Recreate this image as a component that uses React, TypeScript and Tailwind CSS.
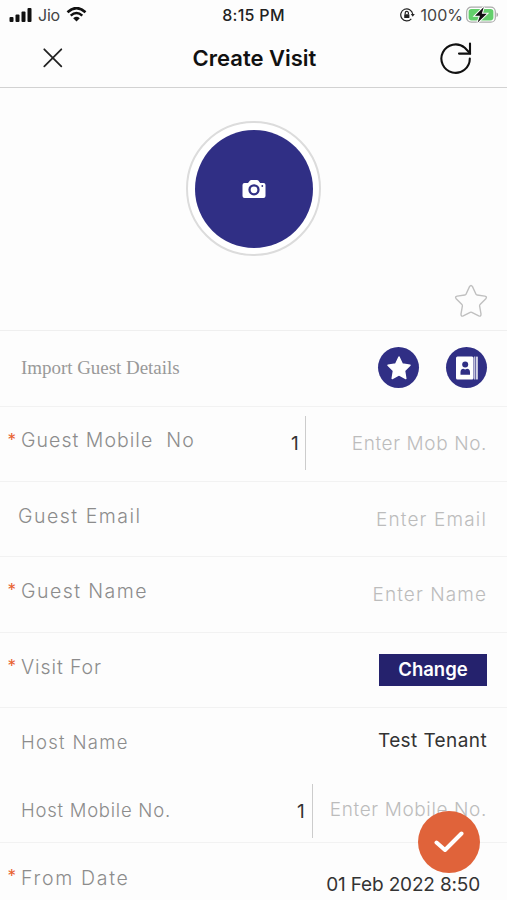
import { ReactNode } from "react";
import clsx from "clsx";

type RowProps = {
  label: string;
  required?: boolean;
  className?: string;
  labelClass?: string;
  children?: ReactNode;
};

function Row({ label, required, className, labelClass, children }: RowProps) {
  return (
    <div className={clsx("flex justify-between pr-5", className)}>
      <div className="flex pt-[20px]">
        <span className="-mt-px w-[21px] shrink-0 pl-[7.5px] text-[17px] leading-[28px] text-[#e8622f]">
          {required ? "*" : ""}
        </span>
        <span className={clsx("whitespace-pre font-light leading-[28px] text-[#8c8c8c]", labelClass)}>{label}</span>
      </div>
      <div className="flex">{children}</div>
    </div>
  );
}

function StatusBar() {
  return (
    <div className="grid h-[30px] grid-cols-3 items-center">
      {/* Signal and carrier */}
      <div className="flex items-center pl-[9px]">
        <svg className="-mt-px" width="23" height="14" viewBox="0 0 23 14" fill="#111">
          <rect x="0.5" y="9" width="4" height="5" rx="1" />
          <rect x="6.5" y="6.5" width="4" height="7.5" rx="1" />
          <rect x="12.5" y="3.5" width="4" height="10.5" rx="1" />
          <rect x="18.5" y="0" width="4" height="14" rx="1" />
        </svg>
        <span className="ml-[6px] text-[16px] tracking-[-0.2px] text-[#444]">Jio</span>
        <svg className="ml-[6px] -mt-px" width="21" height="15" viewBox="0 0 20 15" fill="none" stroke="#111">
          <path d="M1 5.2Q10-3 19 5.2" strokeWidth="2.6" />
          <path d="M4.2 8.6Q10 3.4 15.8 8.6" strokeWidth="2.5" />
          <path d="M10 14.5L6.7 11.2Q10 8.5 13.3 11.2Z" fill="#111" stroke="none" />
        </svg>
      </div>

      <span className="text-center text-[16px] font-medium tracking-[0.3px] text-[#222]">8:15 PM</span>

      {/* Battery */}
      <div className="flex items-center justify-end pr-[8px]">
        <svg width="15" height="14" viewBox="0 0 15 14" fill="none" stroke="#222" strokeWidth="1.2">
          <path d="M11.3 10.8A6 6 0 1 1 12.7 6" />
          <path d="M10.8 6h4l-2 2.7z" fill="#222" stroke="none" />
          <rect x="4.2" y="6.2" width="5.2" height="3.8" rx="0.5" fill="#222" stroke="none" />
          <path d="M5.2 6.3V5a1.6 1.6 0 0 1 3.2 0v1.3" />
        </svg>
        <span className="ml-[6px] text-[16px] text-[#444]">100%</span>
        <svg className="-mt-px ml-[3px]" width="33" height="18" viewBox="0 0 33 18">
          <rect x="0.7" y="1.2" width="28.6" height="15" rx="4.5" fill="#fff" stroke="#aaa" strokeWidth="1.2" />
          <rect x="2.6" y="3" width="24.8" height="11.4" rx="2.8" fill="#63cf6b" />
          <path d="M30.5 6.5v4.5q1.6-.6 1.6-2.25t-1.6-2.25" fill="#aaa" />
          <path d="M17.8 1L9 9.8h5L11.5 16.7L20.8 7.7h-5z" fill="#111" stroke="#fff" strokeWidth="2" paintOrder="stroke" />
        </svg>
      </div>
    </div>
  );
}

function Header() {
  return (
    <header className="flex h-[58px] items-center justify-between border-b border-[#d2d2d2] pb-px pl-[43px] pr-[35px]">
      <svg width="20" height="20" viewBox="0 0 20 20" stroke="#222" strokeWidth="1.8" strokeLinecap="round">
        <path d="M1.3 1.3L18.3 18.3M18.3 1.3L1.3 18.3" />
      </svg>
      <h1 className="ml-[7px] text-[22px] font-semibold text-[#111]">Create Visit</h1>
      <svg className="-mt-px" width="33" height="32" viewBox="0 0 33 32" fill="none" stroke="#111" strokeWidth="2.1">
        <path d="M30.8 16.5A14.2 14.2 0 1 1 25.8 5.8L31 11.3" strokeLinecap="round" />
        <path d="M31 1.5V11.6H20" strokeLinecap="round" />
      </svg>
    </header>
  );
}

function CountryCode({ className }: { className?: string }) {
  return <span className={clsx("text-[19px] leading-[28px] text-[#333]", className)}>1</span>;
}

const placeholder = "text-[#bcbcbc] font-light leading-[28px] whitespace-nowrap text-[19px]";

export default function App() {
  return (
    <div className="relative h-[900px] w-[507px] overflow-hidden bg-[#fdfdfd] font-['Inter',sans-serif]">
      <StatusBar />
      <Header />

      {/* Guest photo */}
      <section className="flex h-[243px] flex-col items-center border-b border-[#efefef] pt-[33px]">
        <div className="flex size-[135px] items-center justify-center rounded-full border-2 border-[#dcdcdc] bg-white">
          <div className="flex size-[118px] items-center justify-center rounded-full bg-[#302f85]">
            <svg width="24" height="20" viewBox="0 0 24 20">
              <path
                d="M2.5 4H6L8 1.6Q8.4 1 9.3 1H15Q15.8 1 16.3 1.6L18.2 4H21.5Q23.5 4 23.5 6V17Q23.5 19 21.5 19H2.5Q.5 19 .5 17V6Q.5 4 2.5 4Z"
                fill="#fff"
              />
              <circle cx="12" cy="10.8" r="4.5" fill="#fff" stroke="#302f85" strokeWidth="2.3" />
              <circle cx="20.3" cy="7" r="0.9" fill="#302f85" />
            </svg>
          </div>
        </div>
        <svg className="mr-[19px] mt-[28px] self-end" width="34" height="34" viewBox="0 0 34 34">
          <path
            d="M15.5 2.7Q17 .3 18.5 2.7L22 10.2Q22.3 10.9 23.2 11L30.8 12.1Q33.5 12.7 31.8 14.7L26.1 20.4Q25.5 21 25.6 21.9L27 30Q27.1 32.8 24.7 31.9L17.8 28.3Q17 27.9 16.2 28.3L9.3 31.9Q6.9 32.8 7 30L8.4 21.9Q8.5 21 7.9 20.4L2.2 14.7Q.5 12.7 3.2 12.1L10.8 11Q11.7 10.9 12 10.2Z"
            fill="none"
            stroke="#c0c0c0"
            strokeWidth="1.4"
          />
        </svg>
      </section>

      {/* Import */}
      <section className="flex h-[76px] items-center justify-between border-b border-[#f2f2f2] pb-[2px] pl-[21px] pr-5">
        <span className="mt-px font-['Liberation_Serif',serif] text-[19px] tracking-[-0.04px] text-[#999]">Import Guest Details</span>
        <div className="flex gap-[27px]">
          <button className="flex size-[41px] items-center justify-center rounded-full bg-[#302f85]">
            <svg width="26" height="26" viewBox="0 0 26 26" fill="#fff">
              <path
                d="M13 2L16.3 9L24 10.2L18.5 15.7L19.8 23.5L13 19.9L6.2 23.5L7.5 15.7L2 10.2L9.7 9Z"
                stroke="#fff"
                strokeWidth="1.5"
                strokeLinejoin="round"
              />
            </svg>
          </button>
          <button className="flex size-[41px] items-center justify-center rounded-full bg-[#302f85]">
            <svg width="22" height="24" viewBox="0 0 22 24">
              <rect x="0" y="0.5" width="17.5" height="23" rx="1.5" fill="#fff" />
              <rect x="18.3" y="0.5" width="1" height="23" fill="#fff" />
              <rect x="20.2" y="0.5" width="1.5" height="23" rx="0.5" fill="#fff" />
              <circle cx="9.2" cy="8.4" r="3" fill="#302f85" />
              <path d="M4.5 18.8V16.2Q4.5 12.9 7.3 12.7L9.2 13.6L11.1 12.7Q14 12.9 14 16.2V18.8Z" fill="#302f85" />
            </svg>
          </button>
        </div>
      </section>

      {/* Form */}
      <Row label="Guest Mobile  No" required className="h-[75px] border-b border-[#f2f2f2]" labelClass="-mt-px text-[19.5px] tracking-[1.03px]">
        <CountryCode className="mt-[23px]" />
        <span className="ml-[6px] mr-[46px] mt-[9px] h-[54px] w-px bg-[#ccc]" />
        <span className={clsx(placeholder, "mt-[23px] tracking-[0.6px]")}>Enter Mob No.</span>
      </Row>
      <Row label="Guest Email" className="h-[75px] border-b border-[#f2f2f2]" labelClass="-ml-[3px] text-[19.5px] tracking-[1.5px]">
        <span className={clsx(placeholder, "mt-[24px] tracking-[1.15px]")}>Enter Email</span>
      </Row>
      <Row label="Guest Name" required className="h-[76px] border-b border-[#f2f2f2]" labelClass="text-[19.5px] tracking-[1.45px]">
        <span className={clsx(placeholder, "mt-[24px] tracking-[1.08px]")}>Enter Name</span>
      </Row>
      <Row label="Visit For" required className="h-[75px] border-b border-[#f2f2f2]" labelClass="text-[19.5px] tracking-[0.9px]">
        <button className="mt-[21px] h-[32px] w-[108px] bg-[#25226d] text-[18.5px] font-semibold text-white">Change</button>
      </Row>
      <Row label="Host Name" className="h-[68px]" labelClass="text-[18.5px] tracking-[1.3px]">
        <span className="mt-[19px] text-[19px] leading-[28px] tracking-[0.4px] text-[#333]">Test Tenant</span>
      </Row>
      <Row label="Host Mobile No." className="h-[67px] border-b border-[#f2f2f2]" labelClass="text-[18.5px] tracking-[0.76px]">
        <CountryCode className="mt-[22px]" />
        <span className="ml-[7px] mr-[17px] mt-[8px] h-[54px] w-px bg-[#ccc]" />
        <span className={clsx(placeholder, "mt-[20px] tracking-[0.62px]")}>Enter Mobile No.</span>
      </Row>
      <Row label="From Date" required className="h-[57px]" labelClass="mt-px text-[19.5px] tracking-[1.7px]">
        <span className="mr-[7px] mt-[28px] text-[19px] leading-[28px] tracking-[-0.17px] text-[#333]">01 Feb 2022 8:50</span>
      </Row>

      {/* Submit */}
      <button className="absolute left-[418px] top-[811px] flex size-[62px] items-center justify-center rounded-full bg-[#e0633a]">
        <svg width="30" height="22" viewBox="0 0 30 22" fill="none" stroke="#fff" strokeWidth="4" strokeLinecap="round" strokeLinejoin="round">
          <path d="M2.5 11.5L11 19L27.5 2.5" />
        </svg>
      </button>
    </div>
  );
}
